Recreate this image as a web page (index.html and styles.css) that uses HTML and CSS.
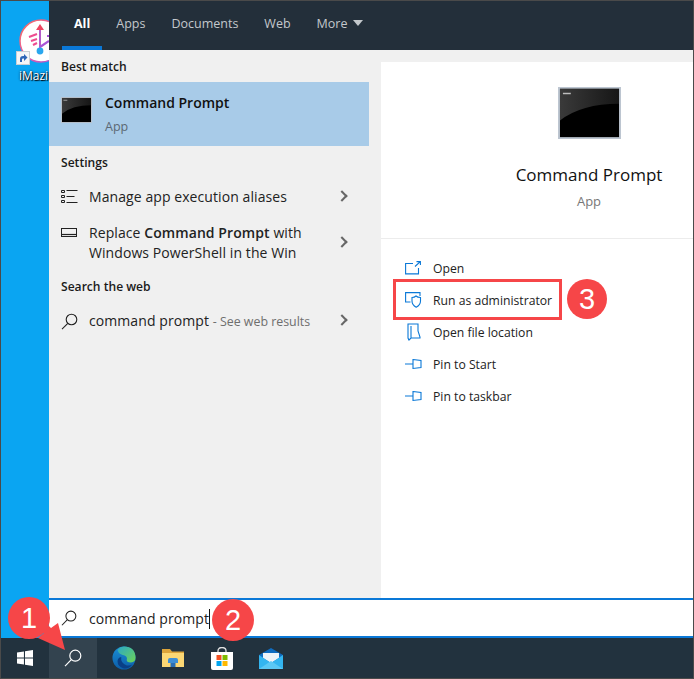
FILE: index.html
```html
<!DOCTYPE html>
<html lang="en">
<head>
<meta charset="utf-8">
<title>Command Prompt search</title>
<link rel="stylesheet" href="styles.css">
</head>
<body>
<div class="frame">
  <div class="main">
    <div class="desktop">
      <div class="shortcut">
        <svg class="app-logo" width="46" height="46" viewBox="0 0 46 46">
          <defs>
            <linearGradient id="ring" x1="0" y1="0" x2="1" y2="1">
              <stop offset="0" stop-color="#f5705a"/><stop offset="0.5" stop-color="#ea5aa8"/><stop offset="1" stop-color="#a25ad8"/>
            </linearGradient>
          </defs>
          <circle cx="23" cy="23" r="21" fill="#fff" stroke="url(#ring)" stroke-width="1.500"/>
          <path d="M22 31V9" stroke="#b45cc8" stroke-width="2"/>
          <path d="M22 6l-4 6h8z" fill="#ee4560"/>
          <path d="M11 19l8-3M13 23l6-2M15 27l4-2" stroke="#ee4c90" stroke-width="2"/>
          <path d="M22 29l9-6M29 18h4v5" stroke="#a855d8" stroke-width="2.200" fill="none"/>
          <circle cx="22" cy="33" r="3.400" fill="#2aa7ee"/>
        </svg>
        <svg class="shortcut-badge" width="14" height="14" viewBox="0 0 14 14">
          <rect x="0.500" y="0.500" width="13" height="13" fill="#f4f6f8" stroke="#c9ced3"/>
          <path d="M4 11V8q0-3 3-3h1V3l3.500 3.500L8 10V7.500H7q-1 0-1 1V11z" fill="#2d66b8"/>
        </svg>
        <span class="shortcut-label">iMazing</span>
      </div>
    </div>
    <div class="panel">
      <nav class="tabs">
        <span class="tab tab-active">All</span>
        <span class="tab">Apps</span>
        <span class="tab">Documents</span>
        <span class="tab">Web</span>
        <span class="tab">More<i class="caret"></i></span>
      </nav>
      <div class="content">
        <section class="results">
          <h2 class="group">Best match</h2>
          <div class="best">
            <svg class="cmd-small" width="31" height="26" viewBox="0 0 32 28" preserveAspectRatio="none">
              <use href="#cmd"/>
            </svg>
            <div>
              <div class="best-title">Command Prompt</div>
              <div class="best-sub">App</div>
            </div>
          </div>
          <h2 class="group">Settings</h2>
          <div class="row row-one">
            <svg class="row-icon" width="17" height="16" viewBox="0 0 17 16" fill="none" stroke="#222">
              <path d="M.5 1.500h3v2h-3zM.5 6.500h3v2h-3zM.5 11.500h3v2h-3z"/>
              <path d="M5.500 1.500h11M5.500 7.500h8M5.500 13.500h11" stroke-width="1.100"/>
            </svg>
            <span class="row-text">Manage app execution aliases</span>
            <i class="chev"></i>
          </div>
          <div class="row row-two">
            <svg class="row-icon row-icon-top" width="17" height="10" viewBox="0 0 17 10" fill="none" stroke="#222">
              <rect x="0.500" y="0.500" width="15" height="8"/>
              <path d="M0 6.500h16" stroke-width="1.200"/>
            </svg>
            <span class="row-text">Replace <b>Command Prompt</b> with<br>Windows PowerShell in the Win</span>
            <i class="chev"></i>
          </div>
          <h2 class="group">Search the web</h2>
          <div class="row row-one">
            <svg class="row-icon" width="17" height="17" viewBox="0 0 17 17" fill="none" stroke="#222" stroke-width="1.100">
              <circle cx="10.500" cy="6.500" r="5.300"/>
              <path d="M6.800 10.300L1 16.200"/>
            </svg>
            <span class="row-text">command prompt <span class="hint">- See web results</span></span>
            <i class="chev"></i>
          </div>
        </section>
        <section class="detail">
          <div class="hero">
            <svg class="cmd-large" width="63" height="52" viewBox="0 0 32 28" preserveAspectRatio="none">
              <defs>
                <linearGradient id="gloss" x1="0" y1="0" x2="1" y2="0">
                  <stop offset="0" stop-color="#3a3a3a"/><stop offset="1" stop-color="#161616"/>
                </linearGradient>
              </defs>
              <g id="cmd">
                <rect x="0.500" y="0.500" width="31" height="27" fill="#000" stroke="#bcc5d0"/>
                <path d="M1 1h30v8Q12 9 1 18z" fill="url(#gloss)"/>
                <path d="M2.500 3.500h4" stroke="#bdbdbd" stroke-width="0.800"/>
              </g>
            </svg>
            <div class="hero-title">Command Prompt</div>
            <div class="hero-sub">App</div>
          </div>
          <ul class="actions">
            <li class="action">
              <svg width="18" height="14" viewBox="0 0 18 14" fill="none" stroke="#0a78d7" stroke-width="1.100">
                <path d="M9 2.500H1.600v10.400H14.500V7M11 5.500L16 .8M12.500.6H16.400V4"/>
              </svg>
              Open
            </li>
            <li class="action action-marked">
              <svg width="18" height="16" viewBox="0 0 18 16" fill="none" stroke="#0a78d7" stroke-width="1.100">
                <path d="M6.500 10H1.600V.6H16V4"/>
                <path d="M8 5.500q2.500 0 4-1.500 1.500 1.500 4.500 1.500V9q0 4-4.300 6.200Q8 13 8 9z"/>
              </svg>
              Run as administrator
              <span class="callout"><span class="badge badge-three">3</span></span>
            </li>
            <li class="action">
              <svg width="18" height="18" viewBox="0 0 18 18" fill="none" stroke="#0a78d7" stroke-width="1.100">
                <path d="M4 1h10v7l2 6v1H7l-2 2-1-2zM7 15V3"/>
              </svg>
              Open file location
            </li>
            <li class="action">
              <svg width="18" height="12" viewBox="0 0 18 12" fill="none" stroke="#0a78d7" stroke-width="1.100">
                <path d="M1 6h8M9 1.500l8 1V9.500l-8 1z"/>
              </svg>
              Pin to Start
            </li>
            <li class="action">
              <svg width="18" height="12" viewBox="0 0 18 12" fill="none" stroke="#0a78d7" stroke-width="1.100">
                <path d="M1 6h8M9 1.500l8 1V9.500l-8 1z"/>
              </svg>
              Pin to taskbar
            </li>
          </ul>
        </section>
      </div>
      <div class="searchbox">
        <svg width="16" height="16" viewBox="0 0 17 17" fill="none" stroke="#222" stroke-width="1.100">
          <circle cx="10.500" cy="6.500" r="5.300"/>
          <path d="M6.800 10.300L1 16.200"/>
        </svg>
        <span class="query">command prompt</span>
        <span class="badge badge-two">2</span>
      </div>
    </div>
  </div>
  <footer class="taskbar">
    <div class="task task-wide">
      <svg width="16" height="16" viewBox="0 0 18 18" fill="#fff">
        <path d="M0 2.700l7.800-1.100v6.900H0zM9 1.500L18 0v8.500H9zM0 9.500h7.800v6.900L0 15.300zM9 9.500h9V18l-9-1.500z"/>
      </svg>
    </div>
    <div class="task task-wide task-search">
      <svg width="18" height="18" viewBox="0 0 18 18" fill="none" stroke="#fff" stroke-width="1.200">
        <circle cx="11.300" cy="6.700" r="5.500"/>
        <path d="M7.300 10.700L1 17.200"/>
      </svg>
    </div>
    <div class="task task-first">
      <svg width="24" height="24" viewBox="0 0 26 26">
        <defs>
          <linearGradient id="edgeA" x1="0" y1="0" x2="1" y2="1"><stop offset="0" stop-color="#2aa8c8"/><stop offset="1" stop-color="#6fd452"/></linearGradient>
          <linearGradient id="edgeB" x1="0" y1="0" x2="0" y2="1"><stop offset="0" stop-color="#1a8fd6"/><stop offset="1" stop-color="#0c5da8"/></linearGradient>
        </defs>
        <circle cx="13" cy="13" r="12.500" fill="url(#edgeB)"/>
        <path d="M6 4Q9 .5 13 .5q12 0 12.500 12 0 5-5 5.500-5 0-4.500-3 1-3.500-3-5C9 9 7 8 6 4z" fill="url(#edgeA)"/>
        <path d="M10 12q-1 7 6 9 3 .8 6-1-4 5.500-10 4Q6 22 6 16.500 6 13 10 12z" fill="#0a3f86"/>
      </svg>
    </div>
    <div class="task">
      <svg width="22" height="18" viewBox="0 0 22 18">
        <path d="M0 0h8l2 2.500h12V18H0z" fill="#dca43a"/>
        <path d="M0 4h22v14H0z" fill="#fbd774"/>
        <path d="M6 11q0-2 2-2h6q2 0 2 2v3H6z" fill="#3d8ed6"/>
        <path d="M8.500 14h5v4h-5z" fill="#2b6fb5"/>
      </svg>
    </div>
    <div class="task">
      <svg width="22" height="23" viewBox="0 0 22 23">
        <path d="M7 7V4q0-3.500 4-3.500t4 3.500v3" fill="none" stroke="#e0e0e0" stroke-width="1.300"/>
        <path d="M0 5h22v16q0 2-2 2H2q-2 0-2-2z" fill="#fff"/>
        <rect x="5.500" y="8" width="5" height="5" fill="#f25022"/>
        <rect x="11.500" y="8" width="5" height="5" fill="#7fba00"/>
        <rect x="5.500" y="14" width="5" height="5" fill="#00a4ef"/>
        <rect x="11.500" y="14" width="5" height="5" fill="#ffb900"/>
      </svg>
    </div>
    <div class="task">
      <svg width="24" height="21" viewBox="0 0 24 21">
        <path d="M0 7L12 0l12 7v14H0z" fill="#0f6cc0"/>
        <path d="M4 5h16v5l-8 5-8-5z" fill="#eef3f8"/>
        <path d="M0 7l12 8 12-8v14H0z" fill="#33b5f0"/>
        <path d="M0 21l12-8 12 8z" fill="#5bc8f5"/>
      </svg>
    </div>
  </footer>
  <span class="badge badge-one">1</span>
  <svg class="arrow" width="70" height="50" viewBox="0 0 70 50">
    <path d="M64 45L57 18 50 23 32 6 24 14 43 28 37 33z" fill="#f64648"/>
  </svg>
</div>
</body>
</html>
```
FILE: styles.css
```css
* { box-sizing: border-box; }
html, body { margin: 0; padding: 0; }
body { font-family: "Open Sans", "Noto Sans", sans-serif; background: #fff; }
.frame {
  position: relative;
  width: 694px;
  height: 679px;
  border: 1px solid #4a4a4a;
  display: flex;
  flex-direction: column;
  overflow: hidden;
}
.main { flex: 1; display: flex; min-height: 0; }
.desktop {
  width: 48px;
  flex: none;
  background: #0aa5f2;
  overflow: hidden;
  padding: 17px 0 0 17px;
}
.shortcut { width: 60px; position: relative; }
.app-logo { display: block; }
.shortcut-badge { position: absolute; left: -2px; top: 33px; }
.shortcut-label {
  display: block;
  margin-top: 4px;
  color: #fff;
  font-size: 12px;
  line-height: 16px;
  text-shadow: 1px 1px 1px #000, 0 0 2px #003;
  padding-left: 1px;
  white-space: nowrap;
}
.panel { flex: 1; display: flex; flex-direction: column; min-width: 0; }
.tabs {
  height: 49px;
  flex: none;
  background: #232f3a;
  display: flex;
  padding-left: 13px;
  gap: 2px;
}
.tab {
  padding: 14px 12px 0;
  color: #c3c8cc;
  font-size: 12.500px;
  line-height: 18px;
  height: 49px;
  border-bottom: 4px solid transparent;
}
.tab-active { color: #fff; font-weight: 700; border-bottom-color: #0a78d7; }
.caret {
  display: inline-block;
  margin-left: 6px;
  vertical-align: 2px;
  border-left: 5.500px solid transparent;
  border-right: 5.500px solid transparent;
  border-top: 6px solid #c3c8cc;
}
.content { flex: 1; display: flex; min-height: 0; background: #f0f0f0; }
.results { width: 320px; flex: none; background: #f0f0f0; }
.group {
  margin: 0;
  padding: 1px 0 0 12px;
  height: 32px;
  font-size: 12.100px;
  line-height: 31px;
  font-weight: 600;
  color: #1a1a1a;
}
.best {
  height: 64px;
  background: #a8cbe8;
  display: flex;
  align-items: flex-start;
  padding: 13px 0 0 12px;
  gap: 13px;
}
.cmd-small { margin-top: 2px; flex: none; }
.best-title { font-size: 14px; font-weight: 600; line-height: 16px; color: #111; }
.best-sub { margin-top: 8px; font-size: 12.500px; line-height: 16px; color: #5c6873; }
.row { display: flex; padding-left: 12px; position: relative; }
.row-one { height: 38px; align-items: center; }
.row-two { height: 54px; align-items: center; }
.row-icon { flex: none; margin-right: 11px; }
.row-icon-top { align-self: flex-start; margin: 12px 11px 0 0; }
.row-text { font-size: 14px; line-height: 20px; color: #222; letter-spacing: 0.080px; }
.row-text b { font-weight: 600; }
.hint { font-size: 12.400px; color: #6e6e6e; letter-spacing: 0; }
.chev {
  position: absolute;
  right: 23px;
  top: 50%;
  width: 8px;
  height: 8px;
  margin-top: -5px;
  border-top: 2px solid #666;
  border-right: 2px solid #666;
  transform: rotate(45deg);
}
.detail {
  flex: 1;
  margin: 12px 0 0 12px;
  background: #fff;
  display: flex;
  flex-direction: column;
}
.hero {
  height: 177px;
  border-bottom: 1px solid #ececec;
  padding: 25px 0 0 104px;
  text-align: center;
}
.cmd-large { display: block; margin: 0 auto; }
.hero-title { margin-top: 23px; font-size: 17px; line-height: 26px; color: #111; }
.hero-sub { margin-top: 4px; font-size: 13px; line-height: 18px; color: #777; }
.actions { list-style: none; margin: 13px 0 0; padding: 0; }
.action {
  position: relative;
  height: 32px;
  display: flex;
  align-items: center;
  font-size: 12.200px;
  color: #222;
  padding-left: 23px;
}
.action svg { width: 18px; flex: none; margin-right: 11px; }
.callout {
  position: absolute;
  left: 12px;
  top: -5px;
  width: 169px;
  height: 41px;
  border: 3px solid #f64648;
}
.badge {
  position: absolute;
  width: 42px;
  height: 42px;
  border-radius: 50%;
  background: #f64648;
  color: #fff;
  font-family: "Liberation Sans", sans-serif;
  font-size: 29px;
  line-height: 42px;
  text-align: center;
  z-index: 3;
}
.badge-three { left: 171px; top: -3px; width: 40px; height: 40px; line-height: 40px; }
.searchbox {
  position: relative;
  height: 40px;
  flex: none;
  background: #fff;
  border-top: 2px solid #0a78d7;
  border-bottom: 2px solid #0a78d7;
  display: flex;
  align-items: center;
  padding-left: 12px;
}
.searchbox svg { margin-right: 12px; }
.query {
  font-size: 14px;
  line-height: 20px;
  margin-top: 1px;
  color: #222;
  letter-spacing: 0.080px;
  border-right: 1px solid #111;
}
.badge-two { left: 163px; top: -1px; }
.taskbar {
  height: 40px;
  flex: none;
  background: #22323e;
  display: flex;
  align-items: center;
}
.task { width: 49px; height: 100%; display: flex; align-items: center; justify-content: center; }
.task-wide { width: 48px; }
.task-first { margin-left: 2px; }
.task-search { background: #33434f; }
.badge-one { left: 7px; top: 596px; }
.arrow { position: absolute; left: 0; top: 604px; z-index: 2; }
```
